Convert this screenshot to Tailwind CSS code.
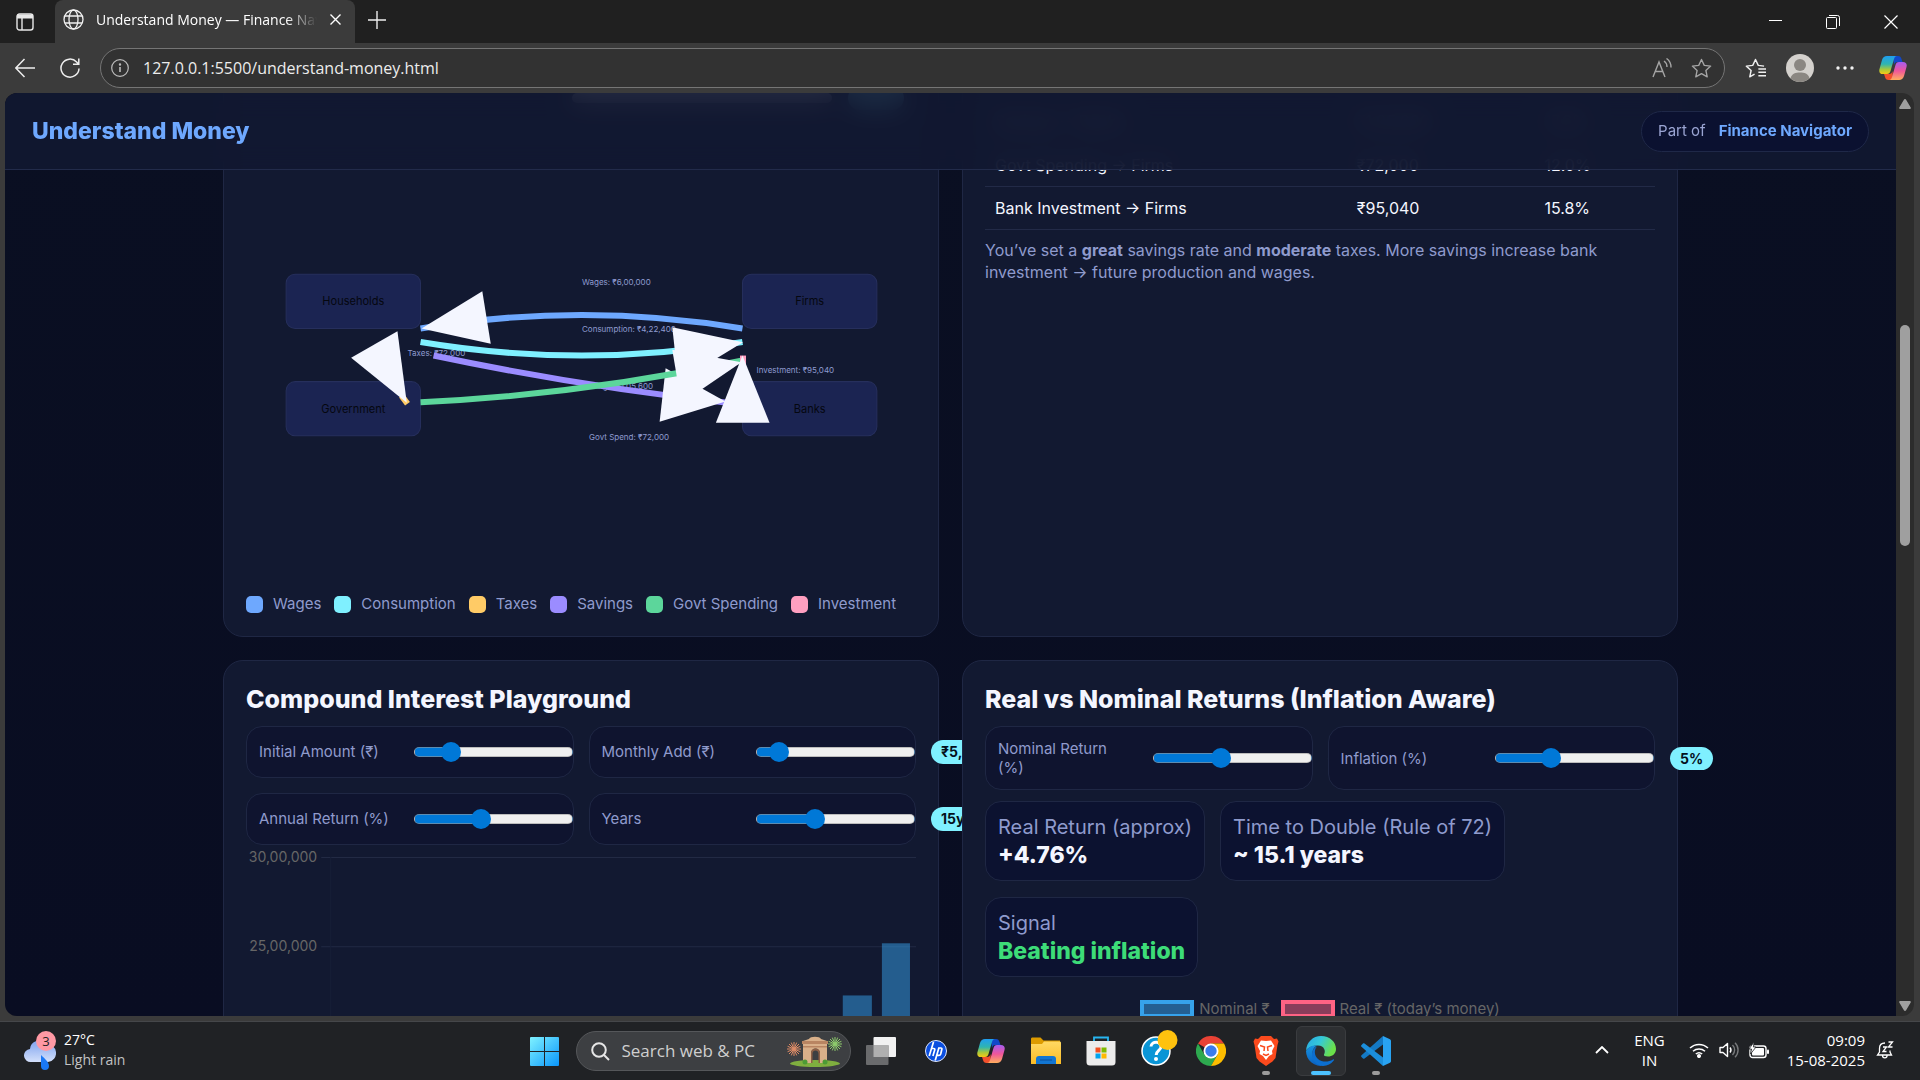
<!DOCTYPE html>
<html lang="en">
<head>
<meta charset="utf-8">
<title>Understand Money — Finance Navigator</title>
<script src="https://cdn.jsdelivr.net/npm/@tailwindcss/browser@4"></script>
</head>
<body class="flex h-screen flex-col overflow-hidden bg-[#3b3b3b] font-['Open_Sans','Noto_Sans',sans-serif] text-white">

<svg class="absolute size-0" aria-hidden="true">
  <defs>
    <linearGradient id="cpA" x1="0" y1="0" x2="0" y2="1"><stop offset="0" stop-color="#1f9df0"/><stop offset=".45" stop-color="#2fb5b0"/><stop offset=".75" stop-color="#a9c93a"/><stop offset="1" stop-color="#f6c915"/></linearGradient>
    <linearGradient id="cpB" x1="0" y1="0" x2="0" y2="1"><stop offset="0" stop-color="#a55cf0"/><stop offset=".5" stop-color="#f0569a"/><stop offset="1" stop-color="#ffae5e"/></linearGradient>
    <linearGradient id="win" gradientUnits="userSpaceOnUse" x1="0" y1="0" x2="29" y2="29"><stop offset="0" stop-color="#7ff2ff"/><stop offset="1" stop-color="#0a96fb"/></linearGradient>
    <linearGradient id="fold" x1="0" y1="0" x2="0" y2="1"><stop offset="0" stop-color="#ffd964"/><stop offset="1" stop-color="#fbbc25"/></linearGradient>
    <linearGradient id="edgeT" x1="0" y1="0" x2="1" y2=".4"><stop offset="0" stop-color="#27a7e6"/><stop offset=".5" stop-color="#35c8d8"/><stop offset="1" stop-color="#6be04a"/></linearGradient>
    <linearGradient id="edgeB" x1="0" y1="0" x2="0" y2="1"><stop offset="0" stop-color="#1592e0"/><stop offset="1" stop-color="#0b5fc0"/></linearGradient>
    <linearGradient id="cloud" x1="0" y1="0" x2="0" y2="1"><stop offset="0" stop-color="#7fa3ee"/><stop offset="1" stop-color="#d3e0fb"/></linearGradient>
    <symbol id="copilot" viewBox="0 0 28 28">
      <path d="M14 2h5c2 0 3 1 3.500 3l1 3h-5c-2 0-3 1-3.500 3z" fill="#1148c9"/>
      <path d="M14 26H9.500c-2 0-3-1-3.500-3l-1-3h5c2 0 3-1 3.500-3z" fill="#f2502c"/>
      <path d="M8 2h10c-1.500 0-2.500 1-3 3l-3.500 12c-.6 2-1.500 3-3.500 3H4c-3 0-4.300-2-3.500-5l2.500-9C3.800 3.500 5.500 2 8 2z" fill="url(#cpA)"/>
      <path d="M20 26H10c1.500 0 2.500-1 3-3l3.500-12c.6-2 1.500-3 3.500-3h4c3 0 4.300 2 3.500 5l-2.500 9c-.8 2.500-2.500 4-5 4z" fill="url(#cpB)"/>
    </symbol>
  </defs>
</svg>

<!-- Tab strip -->
<div class="flex h-[43px] shrink-0 items-stretch bg-[#202020]">
  <button class="flex w-[55px] items-center pl-4" aria-label="Tab actions">
    <svg class="size-[18px]" viewBox="0 0 18 18" fill="none" stroke="#e8e8e8" stroke-width="1.400"><rect x="1" y="1" width="16" height="16" rx="2.500"/><path d="M1 3.500h16" stroke-width="4"/><path d="M6 5v12"/></svg>
  </button>
  <div class="flex w-[300px] items-center rounded-t-lg bg-[#3b3b3b] pb-1 pl-2 pr-2.5">
    <svg class="size-[21px] shrink-0" viewBox="0 0 21 21" fill="none" stroke="#f0f0f0" stroke-width="1.300"><circle cx="10.500" cy="10.500" r="9.500"/><ellipse cx="10.500" cy="10.500" rx="4.500" ry="9.500"/><path d="M2 7h17M2 14h17"/></svg>
    <span class="ml-3 w-[224px] overflow-hidden whitespace-nowrap text-[14px] leading-5 [mask-image:linear-gradient(to_right,black_86%,transparent)]">Understand Money — Finance Navigator</span>
    <button class="ml-2 flex size-5 items-center justify-center" aria-label="Close tab"><svg class="size-[11px]" viewBox="0 0 11 11" stroke="#fff" stroke-width="1.400"><path d="M.5.5l10 10M10.500.5l-10 10"/></svg></button>
  </div>
  <button class="flex w-11 items-center justify-center pb-1" aria-label="New tab"><svg class="size-[18px]" viewBox="0 0 18 18" stroke="#eee" stroke-width="1.400"><path d="M9 0v18M0 9h18"/></svg></button>
  <div class="ml-auto flex">
    <button class="flex w-[58px] items-center justify-center pb-0.5" aria-label="Minimize"><svg class="size-[13px]" viewBox="0 0 13 13" stroke="#fff" stroke-width="1"><path d="M0 6.500h13"/></svg></button>
    <button class="flex w-[58px] items-center justify-center" aria-label="Restore"><svg class="size-[14px]" viewBox="0 0 14 14" fill="none" stroke="#fff"><rect x=".5" y="2.500" width="10" height="11" rx="1"/><path d="M3 .5h8.500a2 2 0 0 1 2 2V11"/></svg></button>
    <button class="flex w-[58px] items-center justify-center" aria-label="Close"><svg class="size-[14px]" viewBox="0 0 14 14" stroke="#fff" stroke-width="1.200"><path d="M.5.5l13 13M13.500.5l-13 13"/></svg></button>
  </div>
</div>

<!-- Address bar -->
<div class="flex h-[50px] shrink-0 items-center pl-[15px] pr-[13px]">
  <button aria-label="Back"><svg class="size-5" viewBox="0 0 20 20" fill="none" stroke="#eee" stroke-width="1.500"><path d="M20 10H1M9.500 1L.8 10l8.700 9"/></svg></button>
  <button class="ml-[25px]" aria-label="Refresh"><svg class="size-5" viewBox="0 0 20 20" fill="none" stroke="#eee" stroke-width="1.500"><path d="M19 10.500A9 9 0 1 1 16.600 4L18.500 6M18.800.5V6.300H13"/></svg></button>
  <div class="ml-5 flex h-10 flex-1 items-center rounded-full border border-[#757575] bg-[#323232] pl-2.5 pr-3">
    <svg class="size-[18px]" viewBox="0 0 18 18" fill="none" stroke="#bdbdbd" stroke-width="1.200"><circle cx="9" cy="9" r="8.300"/><path d="M9 8v5" stroke-width="1.600"/><circle cx="9" cy="5.500" r=".6" fill="#bdbdbd"/></svg>
    <input type="text" aria-label="Address" value="127.0.0.1:5500/understand-money.html" class="ml-[14px] flex-1 bg-transparent text-[16px] text-[#ececec] outline-none">
    <button aria-label="Read aloud"><svg class="size-5" viewBox="0 0 20 20" fill="none" stroke="#a5a5a5" stroke-width="1.400"><path d="M1 19L7 4l6 15M3.200 13.500h7.600M12 3c2 1.300 3 3.500 3 6M14.500.5c3 2 4.500 5 4.500 9"/></svg></button>
    <button class="ml-[19px]" aria-label="Add to favorites"><svg class="size-[21px]" viewBox="0 0 22 22" fill="none" stroke="#a5a5a5" stroke-width="1.400" stroke-linejoin="round"><path d="M11 1.500l2.900 6.200 6.700.8-5 4.600 1.400 6.700-6-3.400-6 3.400 1.400-6.700-5-4.600 6.700-.8z"/></svg></button>
  </div>
  <button class="ml-5" aria-label="Favorites"><svg class="size-[21px]" viewBox="0 0 22 22" fill="none" stroke="#f0f0f0" stroke-width="1.500" stroke-linejoin="round"><path d="M20 8.500l-6.100-.8L11 1.500 8.100 7.700l-6.700.8 5 4.600L5 19.800l5-2.800M14 11.500h8M14 15h8M14 18.500h8"/></svg></button>
  <button class="ml-5" aria-label="Profile"><svg class="size-7" viewBox="0 0 28 28"><circle cx="14" cy="14" r="14" fill="#d4d1cd"/><circle cx="14" cy="11" r="6" fill="#8b8782"/><path d="M4.500 24.200C6 19.500 9.500 18.500 14 18.500s8 1 9.500 5.700A14 14 0 0 1 14 28a14 14 0 0 1-9.500-3.800z" fill="#8b8782"/></svg></button>
  <button class="ml-[22px]" aria-label="Settings and more"><svg class="h-5 w-[18px]" viewBox="0 0 18 20" fill="#f2f2f2"><circle cx="2" cy="10" r="1.700"/><circle cx="9" cy="10" r="1.700"/><circle cx="16" cy="10" r="1.700"/></svg></button>
  <button class="ml-[25px]" aria-label="Copilot"><svg class="size-7"><use href="#copilot"/></svg></button>
</div>

<!-- Page viewport -->
<div class="mb-[5px] ml-[5px] mr-1.5 flex min-h-0 flex-1 overflow-hidden rounded-xl bg-[#2c2c2c]">
  <div class="min-w-0 flex-1 overflow-hidden bg-linear-to-b from-[#0a0f22] to-[#090d22] font-['Inter',sans-serif] text-[#f4f6ff]">

    <header class="sticky top-0 z-20 flex h-[77px] items-center justify-between border-b border-[#222b4a] bg-[#111831]/92 px-[27px] backdrop-blur-md">
      <h1 class="text-[23px] font-extrabold leading-7 text-[#6ea8fe]">Understand Money</h1>
      <div class="flex h-[41px] items-center gap-[13px] rounded-full border border-[#1f2848] bg-[#0b1130] px-4 text-[15px] text-[#9aa4d2]">
        <span>Part of</span><a href="#" class="font-bold text-[#6ea8fe]">Finance Navigator</a>
      </div>
    </header>

    <main class="mx-auto -mt-[97px] grid max-w-[1455px] grid-cols-2 gap-[23px]">

      <!-- Money flow diagram -->
      <section class="relative flex h-[564px] flex-col justify-end rounded-[20px] border border-[#1f2744] bg-[#121931] px-[22px] pb-[22px]">
        <!-- Savings rate slider and its value, scrolled under the header -->
        <div class="absolute right-[34px] top-3 flex items-center gap-4" aria-hidden="true"><i class="h-2.5 w-[260px] rounded-full bg-[#efefef]"></i><i class="h-6 w-14 rounded-full bg-[#7ff0ff]"></i></div>
        <svg class="w-full" viewBox="247 170 668 400" font-family="Inter, sans-serif" font-size="8" fill="none" stroke-width="6">
          <g fill="#1b2452" stroke="#262f5c" stroke-width="1">
            <rect x="287" y="274" width="134" height="54" rx="9"/><rect x="742" y="274" width="134" height="54" rx="9"/>
            <rect x="287" y="381" width="134" height="54" rx="9"/><rect x="742" y="381" width="134" height="54" rx="9"/>
          </g>
          <g fill="#05070f" font-size="11" text-anchor="middle"><text x="354" y="305">Households</text><text x="809" y="305">Firms</text><text x="354" y="412">Government</text><text x="809" y="412">Banks</text></g>
          <g fill="#8f9bd0"><text x="582" y="285">Wages: ₹6,00,000</text><text x="582" y="332">Consumption: ₹4,22,400</text><text x="408" y="355">Taxes: ₹72,000</text><text x="582" y="388">Savings: ₹1,05,600</text><text x="589" y="439">Govt Spend: ₹72,000</text><text x="756" y="372">Investment: ₹95,040</text></g>
          <path d="M742 328Q582 301 421 328" stroke="#6ea8fe"/>
          <path d="M422 328L482.600 291 491 343.300z" fill="#f4f6ff"/>
          <path d="M421 341.500Q582 368.500 742 341.500" stroke="#7ff0ff"/>
          <path d="M742.500 341.700L672 326.700 678 381z" fill="#f4f6ff"/>
          <path d="M402 395l6 8" stroke="#ffcb66"/>
          <path d="M398 330.700L351.800 357.300 407.300 402z" fill="#f4f6ff"/>
          <path d="M434 355Q581 386 727 402" stroke="#9b8cff"/>
          <path d="M725 400.700L665.400 367.700 659.400 421z" fill="#f4f6ff"/>
          <path d="M421 401.500Q582 394 742 360" stroke="#5cd69b"/>
          <path d="M741 361.700L672 349.300 681 402.500z" fill="#f4f6ff"/>
          <path d="M742.500 355v20" stroke="#ff9fc0"/>
          <path d="M742 355L715.500 422H769z" fill="#f4f6ff"/>
        </svg>
        <div class="mt-[23px] flex items-center gap-[13px] whitespace-nowrap text-[15px] leading-5 text-[#8f9bcd]">
          <span class="flex items-center gap-2.5"><i class="size-[17px] rounded-[5px] bg-[#6ea8fe]"></i>Wages</span>
          <span class="flex items-center gap-2.5"><i class="size-[17px] rounded-[5px] bg-[#7ff0ff]"></i>Consumption</span>
          <span class="flex items-center gap-2.5"><i class="size-[17px] rounded-[5px] bg-[#ffcb66]"></i>Taxes</span>
          <span class="flex items-center gap-2.5"><i class="size-[17px] rounded-[5px] bg-[#9b8cff]"></i>Savings</span>
          <span class="flex items-center gap-2.5"><i class="size-[17px] rounded-[5px] bg-[#5cd69b]"></i>Govt Spending</span>
          <span class="flex items-center gap-2.5"><i class="size-[17px] rounded-[5px] bg-[#ff9fc0]"></i>Investment</span>
        </div>
      </section>

      <!-- Flow table -->
      <section class="relative h-[564px] rounded-[20px] border border-[#1f2744] bg-[#121931] px-[22px] pt-[26px]">
        <table class="w-full table-fixed text-left text-[16px] leading-5">
          <colgroup><col class="w-[54%]"><col class="w-[28%]"><col class="w-[18%]"></colgroup>
          <tbody>
            <tr class="h-[43px] border-b border-[#222a47]"><td class="px-2.5">Savings → Banks</td><td class="px-2.5">₹1,05,600</td><td class="px-2.5">17.6%</td></tr>
            <tr class="h-[43px] border-b border-[#222a47]"><td class="px-2.5">Govt Spending → Firms</td><td class="px-2.5">₹72,000</td><td class="px-2.5">12.0%</td></tr>
            <tr class="h-[43px] border-b border-[#222a47]"><td class="px-2.5">Bank Investment → Firms</td><td class="px-2.5">₹95,040</td><td class="px-2.5">15.8%</td></tr>
          </tbody>
        </table>
        <p class="mt-[9px] text-[16px] leading-[22px] text-[#8f9bcd]">You’ve set a <strong>great</strong> savings rate and <strong>moderate</strong> taxes. More savings increase bank investment → future production and wages.</p>
      </section>

      <!-- Compound interest -->
      <section class="relative rounded-[20px] border border-[#1f2744] bg-[#121931] px-[22px] py-[23px]">
        <h2 class="text-[25px] font-extrabold leading-[30px]">Compound Interest Playground</h2>
        <div class="mt-3 grid grid-cols-2 gap-[15px] text-[15px] leading-5 text-[#8f9bcd]">
          <div class="relative flex h-[52px] items-center justify-between rounded-2xl border border-[#1f2744] bg-[#0f142f] pl-3">
            <label for="init">Initial Amount (₹)</label>
            <input id="init" type="range" min="0" max="100" value="19" style="background:linear-gradient(to right,#0078d7 36px,#efefef 36px)" class="h-2.5 w-[159px] appearance-none rounded-full border border-[#9a9a9a]/60 [&::-webkit-slider-thumb]:size-5 [&::-webkit-slider-thumb]:appearance-none [&::-webkit-slider-thumb]:rounded-full [&::-webkit-slider-thumb]:bg-[#0078d7]">
            <output for="init" class="absolute left-full ml-4 rounded-full bg-[#7ff0ff] px-2.5 py-0.5 text-[14px] font-bold text-[#04101c]">₹1,00,000</output>
          </div>
          <div class="relative flex h-[52px] items-center justify-between rounded-2xl border border-[#1f2744] bg-[#0f142f] pl-3">
            <label for="monthly">Monthly Add (₹)</label>
            <input id="monthly" type="range" min="0" max="100" value="9" style="background:linear-gradient(to right,#0078d7 23px,#efefef 23px)" class="h-2.5 w-[159px] appearance-none rounded-full border border-[#9a9a9a]/60 [&::-webkit-slider-thumb]:size-5 [&::-webkit-slider-thumb]:appearance-none [&::-webkit-slider-thumb]:rounded-full [&::-webkit-slider-thumb]:bg-[#0078d7]">
            <output for="monthly" class="absolute left-full ml-4 rounded-full bg-[#7ff0ff] px-2.5 py-0.5 text-[14px] font-bold text-[#04101c]">₹5,000</output>
          </div>
          <div class="relative flex h-[52px] items-center justify-between rounded-2xl border border-[#1f2744] bg-[#0f142f] pl-3">
            <label for="annual">Annual Return (%)</label>
            <input id="annual" type="range" min="0" max="100" value="41" style="background:linear-gradient(to right,#0078d7 67px,#efefef 67px)" class="h-2.5 w-[159px] appearance-none rounded-full border border-[#9a9a9a]/60 [&::-webkit-slider-thumb]:size-5 [&::-webkit-slider-thumb]:appearance-none [&::-webkit-slider-thumb]:rounded-full [&::-webkit-slider-thumb]:bg-[#0078d7]">
            <output for="annual" class="absolute left-full ml-4 rounded-full bg-[#7ff0ff] px-2.5 py-0.5 text-[14px] font-bold text-[#04101c]">12%</output>
          </div>
          <div class="relative flex h-[52px] items-center justify-between rounded-2xl border border-[#1f2744] bg-[#0f142f] pl-3">
            <label for="years">Years</label>
            <input id="years" type="range" min="0" max="100" value="35" style="background:linear-gradient(to right,#0078d7 58px,#efefef 58px)" class="h-2.5 w-[159px] appearance-none rounded-full border border-[#9a9a9a]/60 [&::-webkit-slider-thumb]:size-5 [&::-webkit-slider-thumb]:appearance-none [&::-webkit-slider-thumb]:rounded-full [&::-webkit-slider-thumb]:bg-[#0078d7]">
            <output for="years" class="absolute left-full ml-4 rounded-full bg-[#7ff0ff] px-2.5 py-0.5 text-[14px] font-bold text-[#04101c]">15y</output>
          </div>
        </div>
        <svg class="w-full" viewBox="247 845 668 220" font-family="Inter, sans-serif" font-size="14" fill="#666">
          <path d="M322 857.500H915M322 946.500H915M322 1035.500H915" stroke="#222a44"/>
          <path d="M331.500 857V1065" stroke="#171f38"/>
          <text x="318" y="862" text-anchor="end">30,00,000</text><text x="318" y="951" text-anchor="end">25,00,000</text><text x="318" y="1040" text-anchor="end">20,00,000</text>
          <g fill="#36a2eb" fill-opacity=".5"><rect x="842" y="995" width="29" height="70"/><rect x="881" y="943" width="28" height="122"/></g>
        </svg>
      </section>

      <!-- Real vs nominal -->
      <section class="relative rounded-[20px] border border-[#1f2744] bg-[#121931] px-[22px] py-[23px]">
        <h2 class="text-[25px] font-extrabold leading-[30px]">Real vs Nominal Returns (Inflation Aware)</h2>
        <div class="mt-3 grid grid-cols-2 gap-[15px] text-[15px] leading-[19px] text-[#8f9bcd]">
          <div class="relative flex h-[64px] items-center justify-between rounded-2xl border border-[#1f2744] bg-[#0f142f] pl-3">
            <label for="nominal" class="w-[124px]">Nominal Return (%)</label>
            <input id="nominal" type="range" min="0" max="100" value="42" style="background:linear-gradient(to right,#0078d7 68px,#efefef 68px)" class="h-2.5 w-[159px] appearance-none rounded-full border border-[#9a9a9a]/60 [&::-webkit-slider-thumb]:size-5 [&::-webkit-slider-thumb]:appearance-none [&::-webkit-slider-thumb]:rounded-full [&::-webkit-slider-thumb]:bg-[#0078d7]">
            <output for="nominal" class="absolute left-full ml-4 rounded-full bg-[#7ff0ff] px-2.5 py-0.5 text-[14px] font-bold text-[#04101c]">10%</output>
          </div>
          <div class="relative flex h-[64px] items-center justify-between rounded-2xl border border-[#1f2744] bg-[#0f142f] pl-3">
            <label for="infl">Inflation (%)</label>
            <input id="infl" type="range" min="0" max="100" value="33" style="background:linear-gradient(to right,#0078d7 56px,#efefef 56px)" class="h-2.5 w-[159px] appearance-none rounded-full border border-[#9a9a9a]/60 [&::-webkit-slider-thumb]:size-5 [&::-webkit-slider-thumb]:appearance-none [&::-webkit-slider-thumb]:rounded-full [&::-webkit-slider-thumb]:bg-[#0078d7]">
            <output for="infl" class="absolute left-full ml-4 rounded-full bg-[#7ff0ff] px-2.5 py-0.5 text-[14px] font-bold text-[#04101c]">5%</output>
          </div>
        </div>
        <div class="mt-[11px] flex flex-wrap gap-x-[15px] gap-y-4">
          <div class="h-20 rounded-2xl border border-[#1f2744] bg-[#0c1230] px-3 pt-[11px]"><div class="text-[20px] leading-7 text-[#8f9bcd]">Real Return (approx)</div><div class="text-[23px] font-extrabold leading-7">+4.76%</div></div>
          <div class="h-20 rounded-2xl border border-[#1f2744] bg-[#0c1230] px-3 pt-[11px]"><div class="text-[20px] leading-7 text-[#8f9bcd]">Time to Double (Rule of 72)</div><div class="text-[23px] font-extrabold leading-7">~ 15.1 years</div></div>
          <div class="h-20 rounded-2xl border border-[#1f2744] bg-[#0c1230] px-3 pt-[11px]"><div class="text-[20px] leading-7 text-[#8f9bcd]">Signal</div><div class="text-[23px] font-extrabold leading-7 text-[#3ddc78]">Beating inflation</div></div>
        </div>
        <div class="mt-[23px] flex justify-center gap-[11px] text-[15px] leading-[18px] text-[#666]">
          <span class="flex gap-[5px]"><i class="h-[18px] w-[54px] border-4 border-[#36a2eb] bg-[#245f92]"></i>Nominal ₹</span>
          <span class="flex gap-[5px]"><i class="h-[18px] w-[54px] border-4 border-[#ff6384] bg-[#893e5b]"></i>Real ₹ (today’s money)</span>
        </div>
      </section>
    </main>
  </div>

  <!-- Scrollbar -->
  <div class="flex w-[18px] shrink-0 flex-col items-center pb-[5px] pt-1.5" aria-hidden="true">
    <svg class="h-2.5 w-3" viewBox="0 0 12 10" fill="#9f9f9f"><path d="M6 0c.5 0 .9.300 1.100.7L11.700 8.500c.4.800 0 1.500-.8 1.500H1.100C.3 10-.1 9.300.3 8.500L4.900.7C5.100.3 5.500 0 6 0z"/></svg>
    <div class="mt-[216px] h-[221px] w-2.5 rounded-full bg-[#9f9f9f]"></div>
    <svg class="mt-auto h-2.5 w-3 rotate-180" viewBox="0 0 12 10" fill="#9f9f9f"><path d="M6 0c.5 0 .9.300 1.100.7L11.700 8.500c.4.800 0 1.500-.8 1.500H1.100C.3 10-.1 9.300.3 8.500L4.900.7C5.100.3 5.500 0 6 0z"/></svg>
  </div>
</div>

<!-- Taskbar -->
<footer class="grid h-[59px] shrink-0 grid-cols-[1fr_auto_1fr] items-center border-t border-[#45474a] bg-[#202225]">
  <button class="flex items-center gap-2 pb-0.5 pl-6 text-left" aria-label="Weather">
    <svg class="h-10 w-8" viewBox="0 0 32 40"><path d="M7 32a6.500 6.500 0 0 1-1-13A9 9 0 0 1 22 14a8 8 0 0 1 2 18z" fill="url(#cloud)"/><path d="M17 25c4 4 8 7 8 11a4 4 0 0 1-8 0z" fill="#1a78f5"/><circle cx="22" cy="11" r="10" fill="#ff99a4"/><text x="22" y="16" text-anchor="middle" font-size="13" font-family="Open Sans, sans-serif" fill="#222">3</text></svg>
    <span class="text-[14px] leading-5"><span class="block">27°C</span><span class="block text-[#c2c3c4]">Light rain</span></span>
  </button>

  <div class="flex items-center">
    <button aria-label="Start"><svg class="size-[29px]" viewBox="0 0 29 29" fill="url(#win)"><path d="M1 0h13v14H0V1a1 1 0 0 1 1-1zM15 0h13a1 1 0 0 1 1 1v13H15zM0 15h14v14H1a1 1 0 0 1-1-1zM15 15h14v13a1 1 0 0 1-1 1H15z"/></svg></button>
    <label class="ml-[17px] flex h-10 w-[275px] items-center rounded-full border border-[#55575a] bg-[#3d3f42] pl-[14px] pr-2">
      <svg class="size-[19px] shrink-0" viewBox="0 0 19 19" fill="none" stroke="#e6e6e6" stroke-width="2"><circle cx="8" cy="8" r="6.800"/><path d="M13 13l5 5"/></svg>
      <input type="text" aria-label="Search" placeholder="Search web &amp; PC" class="ml-3 w-[150px] bg-transparent text-[17px] outline-none placeholder:text-[#cfcfcf]">
      <svg class="ml-auto h-8 w-14 shrink-0" viewBox="0 0 56 32"><ellipse cx="29" cy="28.500" rx="25" ry="3.500" fill="#7fae3f"/><g stroke-width="1"><path d="M8 7v14M1 14h14M3 9l10 10M13 9L3 19M5.300 7.600l5.400 12.800M1.600 11.300l12.800 5.400M1.600 16.700l12.800-5.400M5.300 20.400l5.400-12.800" stroke="#dd8b66"/><path d="M49 2v14M42 9h14M44 4l10 10M54 4L44 14M46.300 2.600l5.400 12.800M42.600 6.300l12.800 5.400M42.600 11.700l12.800-5.400M46.300 15.400l5.400-12.800" stroke="#8ecb6c"/></g><path d="M17 6l6-2c1-3 11-3 12 0l6 2v22h-7V18c0-6-9-6-9 0v10h-8z" fill="#d9b08a"/><path d="M16 6h26v3H16zM17 11h24v1.500H17z" fill="#b98562"/><path d="M25 28V18c0-6 9-6 9 0v10h-1.500V18.500c0-4-6-4-6 0V28z" fill="#8d5f45"/><circle cx="19" cy="27" r="2.500" fill="#4d9a35"/><circle cx="39" cy="27" r="2.500" fill="#4d9a35"/></svg>
    </label>
    <button class="ml-[15px]" aria-label="Task view"><svg class="size-[30px]" viewBox="0 0 30 30"><rect x="7.500" y="1" width="22.500" height="20" rx="1" fill="#f2f2f2"/><rect x="0" y="9" width="22.500" height="20" rx="1" fill="#6a6b6d"/><rect x="7.500" y="9" width="15" height="12" fill="#b0b0b0"/></svg></button>
    <button class="ml-[29px]" aria-label="HP"><svg class="size-[22px]" viewBox="0 0 22 22"><circle cx="11" cy="11" r="10.500" fill="#0b4fe0" stroke="#dfe8ff"/><g fill="none" stroke="#fff" stroke-width="1.700"><path d="M8.500 2L4.200 16M6.500 8.500h2.200c1 0 1.300.6 1 1.600L7.900 16M14 7.500L10.200 20.500M13.500 8h2.300c1 0 1.300.6 1 1.600l-1.100 4.300c-.3 1-.8 1.500-1.800 1.500h-2"/></g></svg></button>
    <button class="ml-[30px]" aria-label="Copilot"><svg class="size-7"><use href="#copilot"/></svg></button>
    <button class="ml-[26px]" aria-label="File Explorer"><svg class="size-[30px]" viewBox="0 0 30 30"><path d="M0 3c0-1 .6-1.500 1.500-1.500h8l3 3H29v8H0z" fill="#dd9b00"/><path d="M0 8h11l2-2.500h15.500c1 0 1.500.5 1.500 1.500v21H0z" fill="url(#fold)"/><path d="M5 28v-5a3 3 0 0 1 3-3h14a3 3 0 0 1 3 3v5z" fill="#1276d3"/><path d="M9 24h12" stroke="#0b4f9c"/></svg></button>
    <button class="ml-[25px]" aria-label="Microsoft Store"><svg class="size-[30px]" viewBox="0 0 30 30"><path d="M8 6V1.500h14V6" fill="none" stroke="#27b5f0" stroke-width="1.800"/><path d="M.5 5h29v21a3.500 3.500 0 0 1-3.500 3.500H4A3.500 3.500 0 0 1 .5 26z" fill="#ececec"/><path d="M9.500 11.500h5v5h-5z" fill="#f25022"/><path d="M15.500 11.500h5v5h-5z" fill="#7fba00"/><path d="M9.500 17.500h5v5h-5z" fill="#00a4ef"/><path d="M15.500 17.500h5v5h-5z" fill="#ffb900"/></svg></button>
    <button class="ml-[25px]" aria-label="Get Help"><svg class="size-[30px] overflow-visible" viewBox="0 0 30 30"><circle cx="15" cy="15" r="14" fill="#0a95d6" stroke="#fff" stroke-width="1.500"/><path d="M10 10.500c.5-6 10.500-5.500 10 .5-.3 3.500-4.800 3.500-4.800 8" fill="none" stroke="#fff" stroke-width="3"/><circle cx="15" cy="23" r="2" fill="#fff"/><circle cx="26.500" cy="4" r="10" fill="#ffc20e"/></svg></button>
    <button class="ml-[25px]" aria-label="Chrome"><svg class="size-[30px]" viewBox="0 0 30 30"><path d="M15 15L2 7.500A15 15 0 0 1 28 7.500H15z" fill="#e94235"/><path d="M15 15l-6.500 3.800L2 7.500A15 15 0 0 0 15 30l6.500-11.300z" fill="#2da94f"/><path d="M28 7.500A15 15 0 0 1 15 30l6.500-11.300L21.500 11 15 7.500z" fill="#fdbd00"/><circle cx="15" cy="15" r="7.500" fill="#fff"/><circle cx="15" cy="15" r="5.700" fill="#3a7cec"/></svg></button>
    <button class="relative ml-[25px]" aria-label="Brave"><svg class="size-[30px]" viewBox="0 0 30 30"><path d="M10 0h10l3 3 3-.5 1.500 3L26.500 9l-2 13-3 3.500L15 30l-6.500-4.500-3-3.500-2-13-1-3.500 1.500-3L7 3z" fill="#fb4a1d"/><path d="M15 5l5-.5 3.500 5.500-2.500 5 .5 3-3.500 2L15 24l-3-4-3.500-2 .5-3-2.500-5L10 4.500z" fill="#fff"/><path d="M9 9.500l4.500 1.500-.5 4M21 9.500L16.500 11l.5 4M12 18l3 1.500 3-1.500" fill="none" stroke="#fb4a1d" stroke-width="1.500"/></svg><i class="absolute left-[11px] top-[35px] h-1 w-2 rounded-full bg-[#9b9b9b]"></i></button>
    <button class="relative ml-[15px] flex size-[50px] items-center justify-center rounded-md border border-[#3a3c3f] bg-[#2d2f32]" aria-label="Edge"><svg class="size-[30px]" viewBox="0 0 30 30"><path d="M0 15C.5 6 7 0 15 0c9 0 15 6 15 13 0 5-4 7.500-8 7.500-3 0-4.500-1-4-2 2-3 .5-9-6-9C7 9.500 2 11 0 15z" fill="url(#edgeT)"/><path d="M0 15c2-4 6-6 11-5.500-3 1.500-5 5-4.500 9C7 25 12 29.500 18 29.700A15 15 0 0 1 0 15z" fill="url(#edgeB)"/><path d="M11 10.500c-3 3-3 9 1 12.500 4 3.300 10 3.500 15 .500.800-.5 1.200.2.800.9A15 15 0 0 1 17 30C10 29.500 5.500 24 6 18c.300-3.500 2-6.500 5-7.500z" fill="#0c6fd0"/></svg><i class="absolute bottom-0 h-1 w-5 rounded-full bg-[#4cc2ff]"></i></button>
    <button class="relative ml-[15px]" aria-label="Visual Studio Code"><svg class="size-[30px]" viewBox="0 0 30 30"><path d="M22 0l7 3.300c.6.300 1 .9 1 1.500v20.400c0 .6-.4 1.200-1 1.500L22 30z" fill="#29a3f2"/><path d="M22 0v8.500L3.500 22.500c-.5.400-1 .4-1.500 0l-1.500-1.500c-.6-.6-.6-1.200 0-1.700z" fill="#1479c4"/><path d="M22 30v-8.500L3.500 7.500c-.5-.4-1-.4-1.500 0L.5 9c-.6.600-.6 1.200 0 1.700z" fill="#1b8edb"/></svg><i class="absolute left-[11px] top-[35px] h-1 w-2 rounded-full bg-[#9b9b9b]"></i></button>
  </div>

  <div class="flex items-center justify-end pb-0.5 pr-[26px] text-[15px] leading-5">
    <button aria-label="Show hidden icons"><svg class="h-2 w-[14px]" viewBox="0 0 14 8" fill="none" stroke="#fff" stroke-width="1.800"><path d="M1 7l6-6 6 6"/></svg></button>
    <button class="ml-[25px] text-center">ENG<br>IN</button>
    <button class="ml-6 flex items-center gap-2.5" aria-label="Network, volume, battery">
      <svg class="h-4 w-5" viewBox="0 0 20 16" fill="none" stroke="#fff" stroke-width="1.500"><path d="M1 6a13 13 0 0 1 18 0M4 9.200a9 9 0 0 1 12 0M6.800 12a5 5 0 0 1 6.400 0"/><circle cx="10" cy="14" r="1.300" fill="#fff"/></svg>
      <svg class="h-4 w-5" viewBox="0 0 20 16" fill="none" stroke="#fff" stroke-width="1.400"><path d="M1 5.500h3L8.500 1.500v13L4 10.500H1z" stroke-linejoin="round"/><path d="M11 5.500a4 4 0 0 1 0 5"/><path d="M13.500 3a7 7 0 0 1 0 10M16 .8a10 10 0 0 1 0 14.400" stroke="#77797b"/></svg>
      <svg class="h-[17px] w-5" viewBox="0 0 20 17"><rect x="1" y="4" width="16" height="11.500" rx="2.500" fill="none" stroke="#fff" stroke-width="1.400"/><rect x="3" y="6" width="12" height="7.500" rx="1" fill="#fff"/><rect x="18" y="7.500" width="2" height="4.500" rx="1" fill="#fff"/><path d="M5 0L0 7h2.500L1.500 12 7 5H4.500z" fill="#fff" stroke="#202225" stroke-width=".8"/></svg>
    </button>
    <button class="ml-[18px] whitespace-nowrap text-right">09:09<br>15-08-2025</button>
    <button class="ml-[11px]" aria-label="Notifications"><svg class="size-[18px]" viewBox="0 0 18 18" fill="none" stroke="#fff" stroke-width="1.300"><path d="M9 2C5 2 3.500 4.500 3.500 7.500V11L1.500 14h14l-1.500-3V9.500M6.500 14.500a2.300 2.300 0 0 0 4.600 0M7 6h3.500L7 10.500h3.500M12.500 1h4l-4 5h4"/></svg></button>
  </div>
</footer>
</body>
</html>
